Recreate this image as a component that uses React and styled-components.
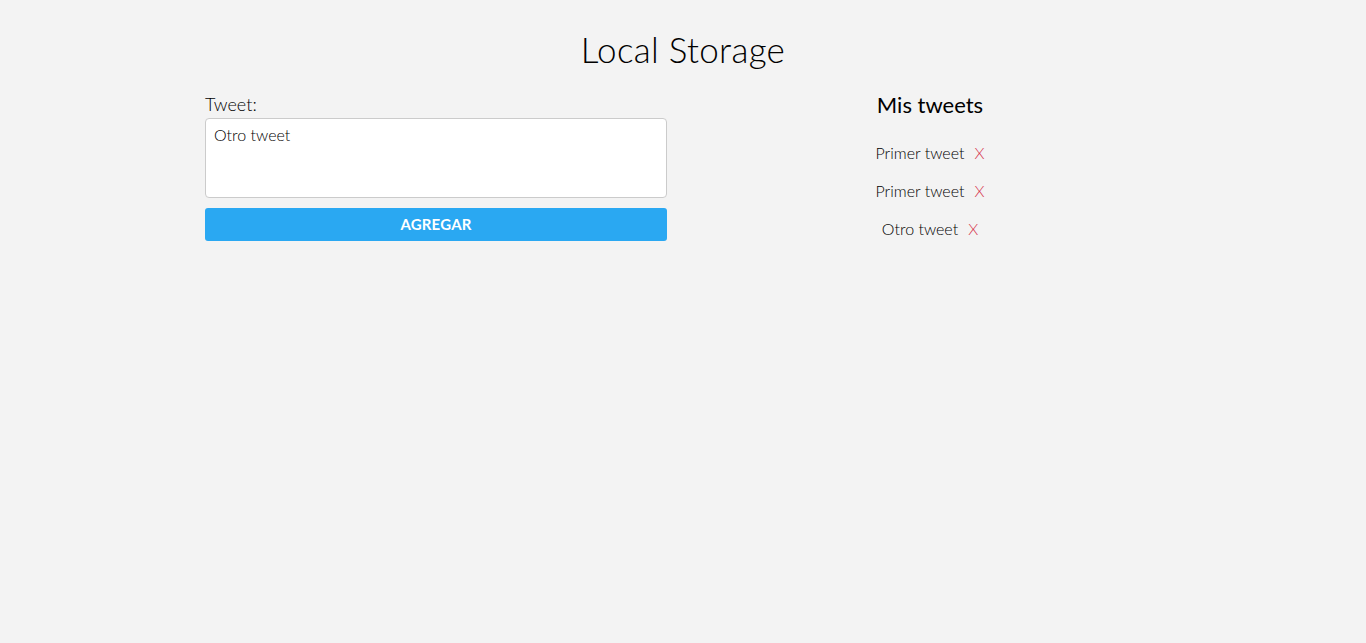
import React from "react";
import styled, { createGlobalStyle } from "styled-components";

const Global = createGlobalStyle`
  html, body { margin: 0; padding: 0; background: #f3f3f3; }
  body { font-family: "Lato", "Open Sans", sans-serif; color: #000; }
  * { box-sizing: border-box; }
`;

const Page = styled.div`
  width: 956px;
  margin: 0 auto;
  padding-top: 27px;
`;

const Title = styled.h1`
  margin: 0 0 23px;
  text-align: center;
  font-weight: 300;
  font-size: 35px;
  line-height: 44px;
  letter-spacing: 0.3px;
`;

const Columns = styled.div`
  display: grid;
  grid-template-columns: 462px 462px;
  column-gap: 32px;
  align-items: start;
`;

const Form = styled.form`
  display: flex;
  flex-direction: column;
`;

const Label = styled.label`
  font-size: 18px;
  font-weight: 300;
  color: #000;
  line-height: 20px;
  margin-bottom: 4px;
`;

const TextArea = styled.textarea`
  width: 462px;
  height: 80px;
  border: 1px solid #cbcbcb;
  border-radius: 4px;
  background: #fff;
  padding: 6px 8px;
  font-family: "Lato", sans-serif;
  font-size: 16px;
  font-weight: 300;
  color: #000;
  resize: none;
  outline: none;
  margin: 0 0 10px;
`;

const Button = styled.button`
  width: 462px;
  height: 33px;
  border: none;
  border-radius: 3px;
  background: #2aa8f2;
  color: #fff;
  font-family: "Lato", sans-serif;
  font-weight: 700;
  font-size: 15px;
  line-height: 33px;
  padding: 0 0 2px;
  letter-spacing: 0.2px;
  cursor: pointer;
`;

const ListCol = styled.div`
  text-align: center;
  margin-top: -4px;
`;

const ListTitle = styled.h2`
  margin: 0 0 23px;
  font-size: 22px;
  font-weight: 400;
  line-height: 30px;
`;

const List = styled.ul`
  list-style: none;
  margin: 0;
  padding: 0;
`;

const Item = styled.li`
  font-size: 16px;
  font-weight: 300;
  line-height: 20px;
  margin-bottom: ${(p) => (p.$last ? 0 : 18)}px;
`;

const Remove = styled.span`
  color: #d6334b;
  margin-left: 10px;
  font-weight: 300;
  cursor: pointer;
`;

const tweets = ["Primer tweet", "Primer tweet", "Otro tweet"];

export default function App() {
  return (
    <>
      <Global />
      <Page>
        <Title>Local Storage</Title>
        <Columns>
          <Form onSubmit={(e) => e.preventDefault()}>
            <Label htmlFor="tweet">Tweet:</Label>
            <TextArea id="tweet" defaultValue="Otro tweet" />
            <Button type="submit">AGREGAR</Button>
          </Form>
          <ListCol>
            <ListTitle>Mis tweets</ListTitle>
            <List>
              {tweets.map((t, i) => (
                <Item key={i} $last={i === tweets.length - 1}>
                  {t}
                  <Remove>X</Remove>
                </Item>
              ))}
            </List>
          </ListCol>
        </Columns>
      </Page>
    </>
  );
}
